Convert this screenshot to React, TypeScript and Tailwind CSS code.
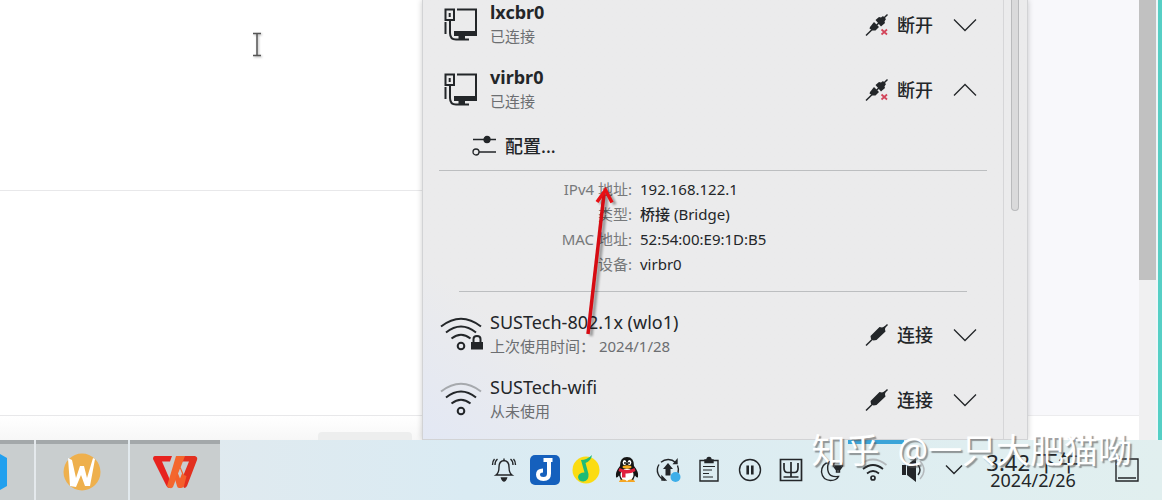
import { useState } from 'react'
import type { ReactNode } from 'react'

interface Connection {
  name: string
  status: string
  icon: ReactNode
  connected: boolean
}

const details = [
  { label: 'IPv4 地址:', value: '192.168.122.1' },
  { label: '类型:', value: <><span className="font-medium">桥接</span> (Bridge)</> },
  { label: 'MAC 地址:', value: '52:54:00:E9:1D:B5' },
  { label: '设备:', value: 'virbr0' },
]

function WiredIcon() {
  return (
    <svg viewBox="0 0 42 42" className="h-[42px] w-[42px]" fill="none" stroke="#232629" strokeWidth="2">
      <path d="M17 5.500h19v26" />
      <path d="M14 27h23v5H14z" fill="#232629" stroke="none" />
      <path d="M18.500 31h6.500v4.500h-6.500z" fill="#232629" stroke="none" />
      <path d="M5.500 5.500h8.500v10.500H5.500z" />
      <path d="M9.700 9v4" />
      <path d="M5.500 18v12M10 16v13q0 6.500 6 6.500H29" />
    </svg>
  )
}

function WifiIcon({ locked = false, weak = false }: { locked?: boolean; weak?: boolean }) {
  return (
    <svg viewBox="0 0 44 42" className="h-[42px] w-[44px]" fill="none" stroke="#232629" strokeWidth="2">
      <path d="M1 12.500q20 -15.500 40 0" stroke={weak ? '#a6a9ad' : '#232629'} />
      <path d="M6 18.500q15 -12 30 0" />
      <path d="M11.500 24.500q9.500 -7.500 19 0" />
      <circle cx="21" cy="32" r="3.300" />
      {locked && (
        <>
          <path d="M31 28h12v7.500H31z" fill="#232629" stroke="none" />
          <path d="M33.500 29v-4q0 -3 3.500 -3t3.500 3v4" />
        </>
      )}
    </svg>
  )
}

function PlugIcon({ off = false }: { off?: boolean }) {
  return (
    <svg viewBox="0 0 24 24" className="h-6 w-6">
      <path d="M1 22.500L22.500 1.500" stroke="#232629" strokeWidth="1.500" />
      {off ? (
        <>
          <path d="M10.500 7l3.500 -3 2 0.500 2 -1.500 3 3 -1.500 2.500 0.500 1.500 -4 3.500z" fill="#232629" />
          <path d="M5 14l4 -5 5 5 -3.500 3.500 -3 0 -3 -2z" fill="#232629" />
          <path d="M16.500 16.500l5.500 5M22 16.500l-5.500 5" stroke="#d3455a" strokeWidth="1.700" />
        </>
      ) : (
        <path d="M5.500 13l9 -9 2.500 0.500 3.500 -1.500 -0.500 3.500 0.500 2 -9 8.500 -3 0.500 -2.500 -1.500z" fill="#232629" />
      )}
    </svg>
  )
}

function Chevron({ up = false }: { up?: boolean }) {
  return (
    <svg viewBox="0 0 24 14" className="h-[14px] w-6" fill="none" stroke="#232629" strokeWidth="1.300">
      <path d={up ? 'M1 12.500L12 1.500L23 12.500' : 'M1 1.500L12 12.500L23 1.500'} />
    </svg>
  )
}

function ConnectionRow({ item, open = false, onToggle }: { item: Connection; open?: boolean; onToggle?: () => void }) {
  return (
    <div className="flex h-[65px] items-center pr-[26px] pl-[17px]">
      <div className="w-[50px] shrink-0">{item.icon}</div>
      <div className="min-w-0 flex-1 pb-[2px]">
        <div className={item.connected ? 'text-lg leading-6 font-bold' : 'text-lg leading-6'}>{item.name}</div>
        <div className="text-[15px] leading-6 text-[#6c6e71]">{item.status}</div>
      </div>
      <button className="flex items-center gap-2 text-lg font-medium">
        <PlugIcon off={item.connected} />
        {item.connected ? '断开' : '连接'}
      </button>
      <button aria-label="详细信息" onClick={onToggle} className="ml-5">
        <Chevron up={open} />
      </button>
    </div>
  )
}

function NetworkPopup() {
  const [open, setOpen] = useState(true)

  return (
    <section className="relative z-10 flex w-[606px] shrink-0 border-r border-b border-l border-[#d2d3d5] bg-[#ebebec] bg-linear-to-tr from-[#e3e8f4] via-[#ebebec] via-20% to-[#ebebec] shadow-[0_0_6px_rgba(0,0,0,0.2)]">
      <div className="-mt-2 min-w-0 flex-1">
        <ConnectionRow item={{ name: 'lxcbr0', status: '已连接', icon: <WiredIcon />, connected: true }} />
        <ConnectionRow
          item={{ name: 'virbr0', status: '已连接', icon: <WiredIcon />, connected: true }}
          open={open}
          onToggle={() => setOpen(!open)}
        />
        {open && (
          <>
            <button className="ml-12 flex h-12 items-center gap-2 text-lg font-medium">
              <svg viewBox="0 0 26 22" className="h-[22px] w-[26px]" stroke="#232629" strokeWidth="1.300">
                <path d="M2 4.500h23M8 17h17" />
                <circle cx="16" cy="4.500" r="3" fill="#232629" />
                <circle cx="5" cy="17" r="3" fill="none" />
              </svg>
              配置...
            </button>
            <dl className="mr-4 ml-4 grid grid-cols-[193px_1fr] gap-x-2 border-t border-[#bcbec0] pt-[6px] text-[15px] leading-[25px]">
              {details.map((d, i) => (
                <div key={i} className="contents">
                  <dt className="text-right text-[#77797b]">{d.label}</dt>
                  <dd>{d.value}</dd>
                </div>
              ))}
            </dl>
          </>
        )}
        <hr className="mt-[14px] mr-9 mb-[10px] ml-9 border-[#bcbec0]" />
        <ConnectionRow
          item={{
            name: 'SUSTech-802.1x (wlo1)',
            status: '上次使用时间： 2024/1/28',
            icon: <WifiIcon locked />,
            connected: false,
          }}
        />
        <ConnectionRow item={{ name: 'SUSTech-wifi', status: '从未使用', icon: <WifiIcon weak />, connected: false }} />
      </div>
      <div className="w-6 border-l border-[#d6d6d8] pl-[7px]">
        <div className="h-[211px] w-2 rounded-b-full border border-t-0 border-[#b9babc] bg-[#dadadb]" />
      </div>

      {/* Annotation arrow */}
      <svg viewBox="0 0 40 160" className="pointer-events-none absolute top-[180px] left-[158px] h-40 w-10 drop-shadow-[3px_2px_1px_rgba(0,0,0,0.35)]">
        <path d="M7 154L23 14" stroke="#d60b12" strokeWidth="3.500" fill="none" />
        <path d="M16 22L24.500 10L31 22.500" stroke="#e80f14" strokeWidth="3.500" fill="none" />
      </svg>
    </section>
  )
}

const thin = { fill: 'none', stroke: '#232629', strokeWidth: 1.4 }

const tray: { label: string; icon: ReactNode }[] = [
  {
    label: '通知',
    icon: (
      <g {...thin}>
        <path d="M8 21q3 -2 3 -8q0 -6 5 -6.500q5 .5 5 6.500q0 6 3 8zM16 6.500v-2" />
        <path d="M13.500 24h5q-1 3 -2.500 3t-2.500 -3z" fill="#232629" />
        <path d="M9.500 5q-2.500 2 -2.500 6M6.500 5q-2 2 -2 6M22.500 5q2.500 2 2.500 6M25.500 5q2 2 2 6" />
      </g>
    ),
  },
  {
    label: 'Joplin',
    icon: (
      <g>
        <rect x="1" y="1" width="30" height="30" rx="5" fill="#1560bd" />
        <path d="M14.500 6h9M20 6v13.500q0 5.500 -5.500 5.500t-5.500 -4.500q0 -4 5 -4" fill="none" stroke="#fff" strokeWidth="4" />
      </g>
    ),
  },
  {
    label: 'QQ音乐',
    icon: (
      <g>
        <circle cx="16" cy="16" r="13.500" fill="#fbdc12" />
        <path d="M11 6q6 0 11 -5q-1 6 -6.500 8l3 11q.5 7 -5 7.500q-5 0 -5.500 -4.500q.5 -4.500 6.500 -4.500z" fill="#1fbb76" />
      </g>
    ),
  },
  {
    label: 'QQ',
    icon: (
      <g>
        <path d="M16 3q7 0 7 9q5 6 4 11q-1 1.500 -3 -1.500l-2 5H10l-2 -5q-2 3 -3 1.500q-1 -5 4 -11q0 -9 7 -9z" fill="#151515" />
        <ellipse cx="16" cy="21" rx="6.500" ry="6.500" fill="#fff" />
        <path d="M8 28q0 -2.500 4 -2.500t4 2.500zM16 28q0 -2.500 4 -2.500t4 2.500z" fill="#f5a623" />
        <path d="M8.500 14q7.500 4 15 0l1 3q-5 3 -10 2.500v4h-3.500v-5l-3.500 -1.500z" fill="#e01f3d" />
        <ellipse cx="13.500" cy="8.500" rx="1.800" ry="2.500" fill="#fff" />
        <ellipse cx="18.500" cy="8.500" rx="1.800" ry="2.500" fill="#fff" />
        <circle cx="14" cy="9" r="0.900" />
        <circle cx="18" cy="9" r="0.900" />
        <ellipse cx="16" cy="13" rx="4.500" ry="1.700" fill="#f8ac20" />
      </g>
    ),
  },
  {
    label: '更新',
    icon: (
      <g {...thin}>
        <path d="M13 26.200A10.500 10.500 0 0 1 7 10.500M9 8.200A10.500 10.500 0 0 1 23.500 8.500M25.500 11.500A10.500 10.500 0 0 1 26 19" />
        <path d="M22 9.500l3 0 0 -3.500zM10 22.500l0 3.500 3.500 0z" fill="#232629" />
        <path d="M16 9l5 6h-2.500v6.500h-5v-6.500H11z" fill="#232629" stroke="none" />
        <circle cx="23.500" cy="23" r="5" fill="#3daee9" stroke="none" />
      </g>
    ),
  },
  {
    label: '剪贴板',
    icon: (
      <g {...thin}>
        <path d="M7 6.500h18v20.500H7z" />
        <path d="M12 8.500V6h2q0 -2.500 2 -2.500t2 2.500H20v2.500z" fill="#232629" />
        <path d="M10 12.500h12M10 16h9M10 19.500h6M10 23h10" strokeWidth="1.200" />
      </g>
    ),
  },
  {
    label: '暂停',
    icon: (
      <g {...thin}>
        <circle cx="16" cy="16" r="10.500" />
        <path d="M13.700 11.500v9M18.300 11.500v9" strokeWidth="2.600" />
      </g>
    ),
  },
  {
    label: '输入法',
    icon: (
      <g {...thin}>
        <path d="M5.500 5.500h21v21h-21z" strokeWidth="1.700" />
        <path d="M9 9v5q0 4.500 3.500 4.500h7q3.500 0 3.500 -4.500V9M16 8v15M8.500 23h15" strokeWidth="1.700" />
      </g>
    ),
  },
  {
    label: '夜间颜色',
    icon: (
      <g {...thin}>
        <path d="M13 8q-7.500 2 -7.500 10q1 8 9 8.500q6 0 8 -4q-8 1 -10 -4q-2 -5 .5 -10.500z" />
        <path d="M17.500 12q0 -5 4.500 -5t4.500 5l-3 4v2h-3v-2z" />
        <path d="M19 12l2 4h2l2 -4z" fill="#232629" />
      </g>
    ),
  },
  {
    label: '网络',
    icon: (
      <g {...thin} strokeWidth="1.700">
        <path d="M2.500 11q13.500 -11 27 0" stroke="#b4b9bc" />
        <path d="M6 15q10 -8 20 0M10 19.500q6 -5 12 0" />
        <circle cx="16" cy="24" r="2" />
      </g>
    ),
  },
  {
    label: '音量',
    icon: (
      <g>
        <path d="M4 11h4v10H4zM9 11l9 -7v24l-9 -7z" fill="#232629" />
        <path d="M20 11q4 5 0 10" {...thin} />
        <path d="M22 7q8 9 0 18" fill="none" stroke="#b4b9bc" strokeWidth="1.400" />
      </g>
    ),
  },
]

function TaskButton({ label, className, children }: { label: string; className: string; children: ReactNode }) {
  return (
    <button aria-label={label} className={`flex h-full items-center border-t-4 border-[#a3a8aa] bg-[#c9cecf] ${className}`}>
      {children}
    </button>
  )
}

function Taskbar() {
  return (
    <footer className="relative z-20 flex h-[60px] shrink-0 bg-linear-to-r from-[#e5e9ec] via-[#daebf3] via-40% to-[#e1efef]">
      <div className="flex flex-1 gap-[2px]">
        <TaskButton label="VS Code" className="w-[34px]">
          <svg viewBox="0 0 8 38" className="h-[38px] w-2">
            <path d="M0 1l7 4v28l-7 4z" fill="#22a0ee" />
          </svg>
        </TaskButton>
        <TaskButton label="Wayland" className="w-[92px] justify-center">
          <svg viewBox="0 0 40 40" className="h-10 w-10">
            <circle cx="20" cy="20" r="18.500" fill="#eeb04d" />
            <path d="M6 6l4 2 4 18 4 -12 4 0 3 12 6 -20 2 1 -5 27 -5 0 -4 -11 -5 12 -6 -1z" fill="#fff" />
          </svg>
        </TaskButton>
        <TaskButton label="WPS Office" className="w-[90px] justify-center">
          <svg viewBox="0 0 46 36" className="h-9 w-[46px]">
            <path d="M3 2h17l-2 5.500h-8l6.500 15 3 8 -2 3.500q-2 0 -3 -2L1 5q0 -3 2 -3z" fill="#e7231f" />
            <path d="M31 2h12q3 1 2 4l-10 26q-1 2 -3 2l-3 -7 8 -19.500h-7z" fill="#e2301f" />
            <path d="M24 2h9L21 33q-1 1.500 -3 1q-2 0 -3 -2z" fill="#f4662d" />
            <path d="M25.500 19l3 -6 3.500 8 2.500 1 -2.500 10q-1 2 -3 2h-2q-1.500 0 -2 -2l-2 -7z" fill="#f4602b" />
            <path d="M28 14.500l2 5 -2 5 -2 -5z" fill="#c9cecf" />
          </svg>
        </TaskButton>
      </div>
      <div className="flex items-center">
        {tray.map(t => (
          <button key={t.label} aria-label={t.label} className="flex h-full w-[41px] items-center justify-center">
            <svg viewBox="0 0 32 32" className="h-8 w-8">{t.icon}</svg>
          </button>
        ))}
        <button aria-label="显示隐藏图标" className="flex w-10 justify-center">
          <svg viewBox="0 0 18 12" className="h-3 w-[18px]" {...thin}>
            <path d="M1 1.500l8 8 8 -8" />
          </svg>
        </button>
        <button className="flex w-[118px] flex-col items-center pt-[2px]">
          <span className="text-[22px] leading-[18px]">3:42 下午</span>
          <span className="text-lg leading-[18px]">2024/2/26</span>
        </button>
        <button aria-label="显示桌面" className="flex w-[70px] justify-center">
          <svg viewBox="0 0 24 24" className="h-6 w-6" {...thin}>
            <path d="M1 1h22v22H1zM3 20h18" />
          </svg>
        </button>
      </div>
      {/* Active applet marker */}
      <div className="absolute top-0 right-[258px] h-1 w-14 bg-[#3ba4d8]" />
      <div className="pointer-events-none absolute -top-2 right-[30px] flex gap-[18px] text-[34px] leading-9 whitespace-nowrap text-white [text-shadow:2px_2px_1px_rgba(90,90,90,0.6)]">
        <span>知乎</span>
        <span>@一只大肥猫呦</span>
      </div>
    </footer>
  )
}

export default function App() {
  return (
    <div className="flex h-screen flex-col overflow-hidden bg-white font-['Noto_Sans','Noto_Sans_CJK_SC',sans-serif] text-[#232629]">
      <main className="flex min-h-0 flex-1">
        <div className="relative flex min-w-0 flex-1 flex-col bg-white">
          <div className="h-[191px] shrink-0 border-b border-[#e8e8ea]" />
          <div className="flex-1 border-b border-[#e8e8ea]" />
          <div className="flex h-6 shrink-0 items-end justify-end bg-linear-to-b from-white to-[#f7f7f7] pr-[10px]">
            <div className="h-2 w-[94px] rounded-t bg-[#edeeee]" />
          </div>
          <svg viewBox="0 0 10 26" className="absolute top-8 left-[252px] h-[26px] w-[10px] drop-shadow-[1px_1px_1px_rgba(0,0,0,0.3)]" stroke="#555" strokeWidth="1.500">
            <path d="M1 1.500h8M5 1.500v22M1 23.500h8" />
          </svg>
        </div>

        <NetworkPopup />

        <div className="flex w-[111px] shrink-0 flex-col bg-[#f8f8fb]">
          <div className="flex-1 border-b border-[#ececee]" />
          <div className="h-6 bg-white" />
        </div>
        <div className="w-[17px] shrink-0 bg-[#f0f0f1]">
          <div className="h-[280px] bg-[#c1c1c1]" />
        </div>
        <div className="w-[6px] shrink-0 border-l-2 border-[#edf6f8] bg-[#56cfc5]" />
      </main>
      <Taskbar />
    </div>
  )
}
